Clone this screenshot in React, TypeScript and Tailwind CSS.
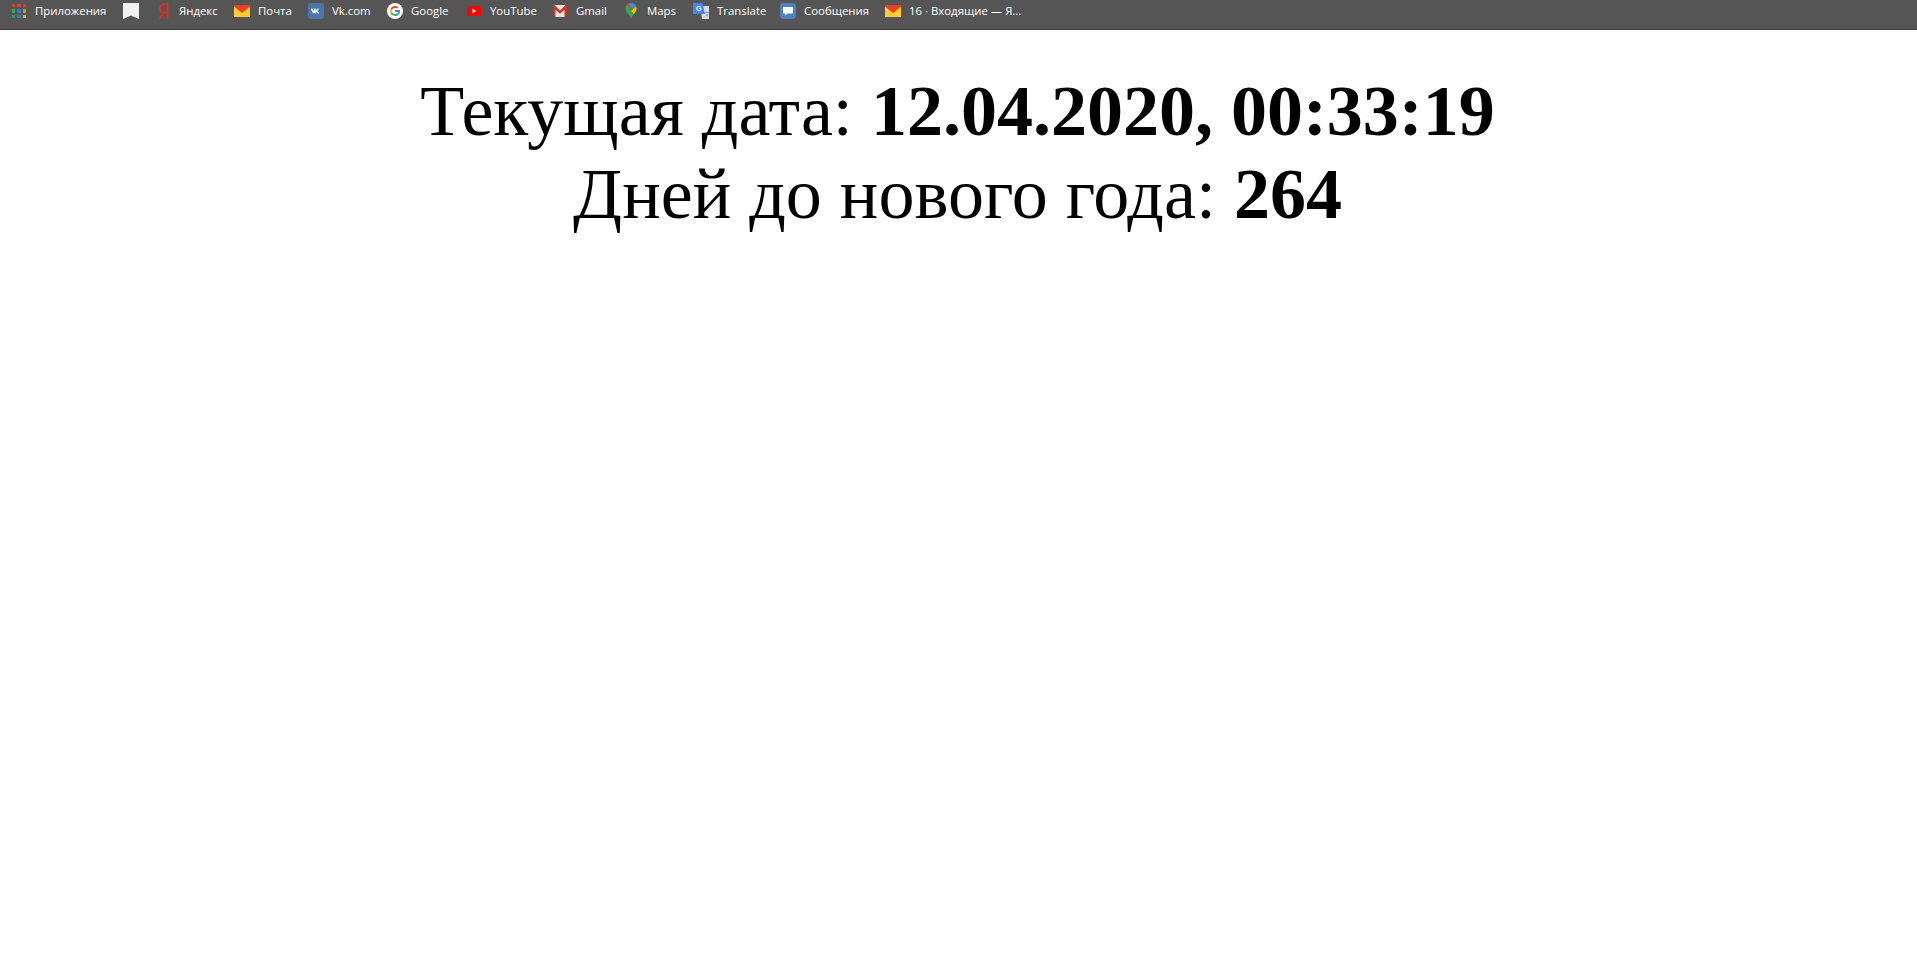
const barFont = "font-['Open_Sans','Noto_Sans',sans-serif]";

function Apps() {
  const colors = ["#e53935", "#e53935", "#e53935", "#34a853", "#2f7de1", "#f4811e", "#2e9e4f", "#2f7de1", "#f9b000"];
  return (
    <span className="grid h-4 w-4 grid-cols-3 gap-[2px] p-[1px]">
      {colors.map((c, i) => (
        <span key={i} style={{ background: c }} />
      ))}
    </span>
  );
}

function Bookmark() {
  return (
    <svg width="16" height="16" viewBox="0 0 16 16">
      <path d="M0 0h16v16l-8-3.500-8 3.500z" fill="#f1f1f1" />
    </svg>
  );
}

function Yandex() {
  return (
    <svg width="16" height="16" viewBox="0 0 16 16">
      <path d="M12.500 0v16M12.500 1H9.800C6.800 1 5 3 5 5.500 5 8 6.500 9.500 9 9.500h3.500M9.200 9.500 4.500 16" fill="none" stroke="#ee2a1c" strokeWidth="1.700" />
    </svg>
  );
}

function Mail() {
  return (
    <svg width="16" height="16" viewBox="0 0 16 16">
      <path d="M0 2h16v12H0z" fill="#ffcc33" />
      <path d="M0 2h16v1.500L8 10 0 3.500z" fill="#f03d25" />
    </svg>
  );
}

function Vk() {
  return (
    <svg width="16" height="16" viewBox="0 0 16 16">
      <rect width="16" height="16" rx="3" fill="#4a76a8" />
      <path d="M3 5.500h1.500c.4 1.300 1 2.300 1.700 2.800V5.500h1.500v1.900c.7-.2 1.300-1 1.700-1.900h1.500c-.3 1.100-1 2-1.700 2.500.8.400 1.500 1.200 1.900 2.500h-1.600c-.4-.9-1-1.500-1.800-1.700v1.700h-.4C4.900 10.500 3.300 8.600 3 5.500z" fill="#fff" />
    </svg>
  );
}

function Google() {
  return (
    <svg width="16" height="16" viewBox="0 0 16 16">
      <circle cx="8" cy="8" r="8" fill="#fff" />
      <path d="M8 4.800c.8 0 1.500.3 2 .8l1.300-1.300A5 5 0 0 0 3.500 5.800L5 7a3.200 3.200 0 0 1 3-2.200z" fill="#ea4335" />
      <path d="M5 9 3.500 10.200a5 5 0 0 1 0-4.400L5 7a3.200 3.200 0 0 0 0 2z" fill="#fbbc05" />
      <path d="M8 13a5 5 0 0 1-4.500-2.800L5 9a3.200 3.200 0 0 0 3 2.200c.8 0 1.500-.2 2-.6l1.500 1.200A5 5 0 0 1 8 13z" fill="#34a853" />
      <path d="M13 8c0-.3 0-.7-.1-1H8v2h2.800a2.500 2.500 0 0 1-.8 1.600l1.500 1.200C12.400 11 13 9.600 13 8z" fill="#4285f4" />
    </svg>
  );
}

function YouTube() {
  return (
    <svg width="16" height="16" viewBox="0 0 16 16">
      <rect x="1" y="3" width="14" height="10" rx="2.500" fill="#f00" />
      <path d="M6.500 5.800v4.400L10.300 8z" fill="#fff" />
    </svg>
  );
}

function Gmail() {
  return (
    <svg width="16" height="16" viewBox="0 0 16 16">
      <path d="M1 2h14v12H1z" fill="#e8e3df" />
      <path d="M1 2h1.500L8 7.500 13.500 2H15v12h-2.500V6.800L8 10.800 3.500 6.800V14H1z" fill="#c5392c" />
    </svg>
  );
}

function Maps() {
  return (
    <svg width="16" height="16" viewBox="0 0 16 16">
      <path d="M8 0a5.500 5.500 0 0 0-5.500 5.500C2.500 9.500 6.800 11.500 8 16c1.200-4.500 5.500-6.500 5.500-10.500A5.500 5.500 0 0 0 8 0z" fill="#34a853" />
      <path d="M3.600 2.200 8 5.500 5.800.5a5.500 5.500 0 0 0-2.200 1.700z" fill="#ea4335" />
      <path d="M8 0a5.500 5.500 0 0 1 5.200 3.800L8 5.500 5.800.5z" fill="#4285f4" />
      <path d="M13.200 3.800l.3 1.700c0 2.200-1.400 3.800-2.700 5.500L8 7.500z" fill="#fbbc04" />
      <circle cx="8" cy="5.500" r="2" fill="#8d6e3f" />
    </svg>
  );
}

function Translate() {
  return (
    <svg width="16" height="16" viewBox="0 0 16 16">
      <path d="M7 3h9v13H9z" fill="#dcdcdc" />
      <path d="M0 0h9.500L12 11H0z" fill="#4285f4" />
      <text x="3" y="8" fontSize="7" fontWeight="700" fill="#fff" fontFamily="Liberation Sans, sans-serif">G</text>
      <text x="10.500" y="13" fontSize="6" fill="#8a8a8a" fontFamily="Liberation Sans, sans-serif">文</text>
    </svg>
  );
}

function Messages() {
  return (
    <svg width="16" height="16" viewBox="0 0 16 16">
      <rect width="16" height="16" rx="3" fill="#4f81bd" />
      <path d="M4 4h8a1 1 0 0 1 1 1v4.500a1 1 0 0 1-1 1H7.500L5 12.500v-2H4a1 1 0 0 1-1-1V5a1 1 0 0 1 1-1z" fill="#fff" />
    </svg>
  );
}

const items = [
  { icon: <Yandex />, label: "Яндекс", w: "w-[79px]" },
  { icon: <Mail />, label: "Почта", w: "w-[74px]" },
  { icon: <Vk />, label: "Vk.com", w: "w-[79px]" },
  { icon: <Google />, label: "Google", w: "w-[79px]" },
  { icon: <YouTube />, label: "YouTube", w: "w-[86px]" },
  { icon: <Gmail />, label: "Gmail", w: "w-[71px]" },
  { icon: <Maps />, label: "Maps", w: "w-[70px]" },
  { icon: <Translate />, label: "Translate", w: "w-[87px]" },
  { icon: <Messages />, label: "Сообщения", w: "w-[105px]" },
  { icon: <Mail />, label: "16 · Входящие — Я...", w: "w-[140px]" },
];

export default function App() {
  return (
    <div className="min-h-screen bg-white">
      <div className={`flex h-[30px] items-center border-b border-[#3c3c3c] bg-[#555555] pb-[7px] pl-[11px] text-[11.4px] text-white ${barFont}`}>
        <div className="flex w-[112px] shrink-0 items-center gap-[8px]">
          <Apps />
          <span>Приложения</span>
        </div>
        <div className="flex w-[32px] shrink-0 items-center">
          <Bookmark />
        </div>
        {items.map((it) => (
          <div key={it.label} className={`flex shrink-0 items-center gap-[8px] ${it.w}`}>
            {it.icon}
            <span className="whitespace-nowrap">{it.label}</span>
          </div>
        ))}
      </div>
      <div className="pt-[40px] pr-[2px] text-center font-['Liberation_Serif',serif] text-[72px] leading-[83px] text-black">
        <div>
          Текущая дата: <b>12.04.2020, 00:33:19</b>
        </div>
        <div>
          Дней до нового года: <b>264</b>
        </div>
      </div>
    </div>
  );
}
